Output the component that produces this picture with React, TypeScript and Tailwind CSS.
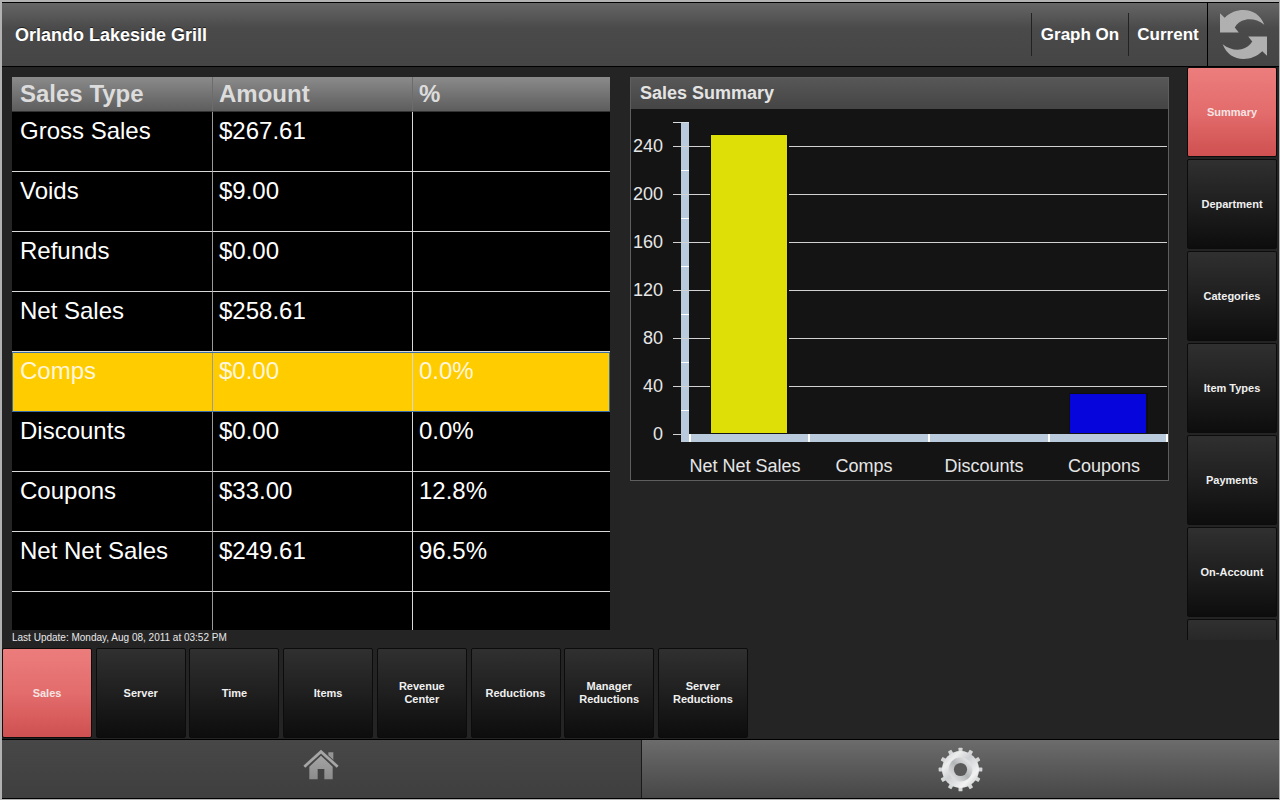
import { useState } from 'react';
import clsx from 'clsx';

type SalesRow = { type: string; amount: string; percent: string };

const salesRows: SalesRow[] = [
  { type: 'Gross Sales', amount: '$267.61', percent: '' },
  { type: 'Voids', amount: '$9.00', percent: '' },
  { type: 'Refunds', amount: '$0.00', percent: '' },
  { type: 'Net Sales', amount: '$258.61', percent: '' },
  { type: 'Comps', amount: '$0.00', percent: '0.0%' },
  { type: 'Discounts', amount: '$0.00', percent: '0.0%' },
  { type: 'Coupons', amount: '$33.00', percent: '12.8%' },
  { type: 'Net Net Sales', amount: '$249.61', percent: '96.5%' },
];

const chartData = [
  { label: 'Net Net Sales', value: 249, color: '#dfdf08' },
  { label: 'Comps', value: 0, color: '#00c000' },
  { label: 'Discounts', value: 0, color: '#c00000' },
  { label: 'Coupons', value: 33, color: '#0606dc' },
];

const views = ['Summary', 'Department', 'Categories', 'Item Types', 'Payments', 'On-Account', ''];

const reports = [
  'Sales',
  'Server',
  'Time',
  'Items',
  'Revenue Center',
  'Reductions',
  'Manager Reductions',
  'Server Reductions',
];

function TileButton({
  label,
  active,
  onClick,
}: {
  label: string;
  active: boolean;
  onClick: () => void;
}) {
  return (
    <button
      onClick={onClick}
      aria-pressed={active}
      aria-label={label || 'More'}
      className={clsx(
        'flex size-[90px] shrink-0 items-center justify-center rounded-xs border border-[#0c0c0c] px-2 text-center text-[11px] leading-[13px] font-bold bg-linear-to-b',
        active
          ? 'from-[#ec7d7d] via-[#e36c6c] to-[#cf5050] text-[#f6e4e4]'
          : 'from-[#303030] via-[#1f1f1f] to-[#0d0d0d] text-[#f0f0f0]'
      )}
    >
      {label}
    </button>
  );
}

function RefreshIcon() {
  const arrow =
    'M6 16 L20 29 C36 13 56 6 76 6 C104 6 128 22 138 50 C120 36 100 31 82 35 C67 38 56 47 50 58 L62 73 L6 73 Z';
  return (
    <svg viewBox="0 0 152 158" className="h-[53px] w-[51px]" fill="#b0b0b0" aria-hidden="true">
      <path d={arrow} />
      <path d={arrow} transform="rotate(180 76 79)" />
    </svg>
  );
}

function HomeIcon() {
  return (
    <svg viewBox="0 0 108 96" className="h-8 w-9" aria-hidden="true">
      <defs>
        <linearGradient id="house" x1="0" y1="0" x2="0" y2="1">
          <stop offset="0" stopColor="#a4a4a4" />
          <stop offset="1" stopColor="#8c8c8c" />
        </linearGradient>
      </defs>
      <path d="M76 10 H91 V34 L76 20 Z" fill="#949494" />
      <path d="M19 53 L54 20 L89 53 V91 H64 V60 H44 V91 H19 Z" fill="url(#house)" />
      <path d="M4 53 L54 8 L104 53" fill="none" stroke="#4a4a4a" strokeWidth="13" />
      <path d="M4 53 L54 8 L104 53" fill="none" stroke="#a6a6a6" strokeWidth="8" />
    </svg>
  );
}

function GearIcon() {
  const teeth = Array.from({ length: 12 }, (_, i) => i * 30);
  return (
    <svg viewBox="0 0 136 136" className="size-[45px]" aria-hidden="true">
      <defs>
        <linearGradient id="steel" x1="0" y1="0" x2="1" y2="1">
          <stop offset="0" stopColor="#c4c7c9" />
          <stop offset="0.25" stopColor="#eceded" />
          <stop offset="0.45" stopColor="#cdd0d2" />
          <stop offset="0.75" stopColor="#f2f2f2" />
          <stop offset="1" stopColor="#b4b7b9" />
        </linearGradient>
        <linearGradient id="steelInner" x1="1" y1="0" x2="0" y2="1">
          <stop offset="0" stopColor="#e8e8e8" />
          <stop offset="0.5" stopColor="#b2b5b7" />
          <stop offset="1" stopColor="#e2e3e4" />
        </linearGradient>
      </defs>
      {teeth.map(angle => (
        <rect
          key={angle}
          x="62"
          y="2"
          width="12"
          height="18"
          rx="2"
          fill="#d4d6d7"
          transform={`rotate(${angle} 68 68)`}
        />
      ))}
      <circle cx="68" cy="68" r="56" fill="url(#steel)" />
      <circle cx="68" cy="68" r="28" fill="none" stroke="url(#steelInner)" strokeWidth="16" />
      <circle cx="68" cy="68" r="20" fill="#5a5a5a" />
    </svg>
  );
}

function SalesTable() {
  const [selected, setSelected] = useState('Comps');

  return (
    <table className="w-full table-fixed border-separate border-spacing-0 bg-black text-left text-2xl text-white">
      <colgroup>
        <col className="w-[201px]" />
        <col className="w-[200px]" />
        <col />
      </colgroup>
      <thead>
        <tr className="h-[35px] bg-linear-to-b from-[#8b8b8b] to-[#5c5c5c] text-[#dcdcdc]">
          <th className="border-r border-b border-r-[#6c6c6c] border-b-[#333333] pl-2 leading-8">Sales Type</th>
          <th className="border-r border-b border-r-[#6c6c6c] border-b-[#333333] pl-[6px] leading-8">Amount</th>
          <th className="border-b border-b-[#333333] pl-[6px] leading-8">%</th>
        </tr>
      </thead>
      <tbody>
        {salesRows.map(row => {
          const active = row.type === selected;
          const cell = clsx(
            'border-b py-[3px] align-top leading-8',
            active ? 'border-b-[#3b6ea5]' : 'border-b-[#d8d8d8]'
          );
          return (
            <tr
              key={row.type}
              onClick={() => setSelected(row.type)}
              className={clsx(
                'h-[60px]',
                active && 'bg-[#ffcc00] text-[#fff6dc] outline-1 -outline-offset-1 outline-[#3b6ea5]'
              )}
            >
              <td className={clsx(cell, 'border-r border-r-[#9a9a9a] pl-2')}>{row.type}</td>
              <td className={clsx(cell, 'border-r border-r-[#d8d8d8] pl-[6px]')}>{row.amount}</td>
              <td className={clsx(cell, 'pl-[6px]')}>{row.percent}</td>
            </tr>
          );
        })}
        {/* Spare row at the end of the grid */}
        <tr className="h-[38px]">
          <td className="border-r border-r-[#9a9a9a]" />
          <td className="border-r border-r-[#d8d8d8]" />
          <td />
        </tr>
      </tbody>
    </table>
  );
}

const PLOT_LEFT = 58;
const PLOT_RIGHT = 537;
const PLOT_TOP = 13;
const BASELINE = 325;
const AXIS_MAX = 260;

function SalesChart() {
  const y = (value: number) => Math.round(BASELINE - (value / AXIS_MAX) * (BASELINE - PLOT_TOP));
  const step = (PLOT_RIGHT - PLOT_LEFT) / chartData.length;

  return (
    <svg viewBox="0 0 537 371" className="w-full" fontSize="18" fill="#e6e6e6">
      {/* Value axis */}
      <rect x="50" y={PLOT_TOP} width="8" height={BASELINE - PLOT_TOP + 8} fill="#b9cadc" />
      <rect x="42" y={PLOT_TOP} width="16" height="1" fill="#d8dde2" />
      {[20, 60, 100, 140, 180, 220].map(v => (
        <rect key={v} x="50" y={y(v)} width="8" height="1" fill="#ffffff" />
      ))}
      {[0, 40, 80, 120, 160, 200, 240].map(v => (
        <g key={v}>
          <rect x="42" y={y(v)} width={(v === 0 ? PLOT_LEFT : PLOT_RIGHT - 1) - 42} height="1" fill="#d2d2d2" />
          <text x="32" y={y(v) + 6} textAnchor="end">
            {v}
          </text>
        </g>
      ))}

      {/* Category axis */}
      <rect x="50" y={BASELINE} width={PLOT_RIGHT - 50} height="8" fill="#b9cadc" />
      {chartData.map((item, i) => {
        const left = Math.floor(PLOT_LEFT + step * i);
        return (
          <g key={item.label}>
            <rect x={left} y={BASELINE} width="2" height="8" fill="#ffffff" />
            {item.value > 0 && (
              <>
                <rect x={left + 21} y={y(item.value) - 1} width="79" height={BASELINE - y(item.value)} fill="#0e0e0e" />
                <rect x={left + 22} y={y(item.value)} width="76" height={BASELINE - y(item.value) - 1} fill={item.color} />
              </>
            )}
            <text x={left + 56} y="363" textAnchor="middle">
              {item.label}
            </text>
          </g>
        );
      })}
      <rect x={PLOT_RIGHT - 2} y={BASELINE} width="2" height="8" fill="#ffffff" />
    </svg>
  );
}

export default function App() {
  const [view, setView] = useState('Summary');
  const [report, setReport] = useState('Sales');
  const [showGraph, setShowGraph] = useState(true);

  return (
    <div className="flex min-h-screen flex-col border-t-2 border-r border-b border-l-2 border-[#b2b2b2] bg-[#242424] font-['Liberation_Sans',Arial,sans-serif] text-white">
      <header className="flex h-[65px] items-center border-y border-black bg-linear-to-b from-[#666666] via-[#4a4a4a] via-40% to-[#454545] font-bold text-shadow-[0_-1px_0_#222222]">
        <h1 className="flex-1 pl-[13px] text-lg">Orlando Lakeside Grill</h1>
        <button
          onClick={() => setShowGraph(!showGraph)}
          className="h-[43px] w-[97px] border-l border-[#222222] text-[17px]"
        >
          Graph {showGraph ? 'On' : 'Off'}
        </button>
        <button className="h-[43px] w-[79px] border-l border-[#222222] text-[17px]">Current</button>
        <button
          aria-label="Refresh"
          className="flex w-[72px] items-center justify-center self-stretch border-l border-black"
        >
          <RefreshIcon />
        </button>
      </header>

      <main className="flex flex-1">
        <div className="flex flex-1 flex-col pt-[10px] pr-[18px] pl-[10px]">
          <div className="flex items-start gap-5">
            <div className="min-w-0 flex-[598]">
              <SalesTable />
              <p className="text-[10px] leading-4 text-[#e8e8e8]">
                Last Update: Monday, Aug 08, 2011 at 03:52 PM
              </p>
            </div>
            <section className="min-w-0 flex-[539]">
              {showGraph && (
                <div className="border border-[#5e5e5e] bg-[#141414]">
                  <h2 className="bg-linear-to-b from-[#575757] to-[#454545] pl-[9px] text-lg leading-[31px] font-bold text-[#e4e4e4]">
                    Sales Summary
                  </h2>
                  <SalesChart />
                </div>
              )}
            </section>
          </div>
        </div>

        <nav className="mr-[2px] flex max-h-[573px] flex-col gap-[2px] overflow-hidden">
          {views.map(label => (
            <TileButton key={label} label={label} active={label === view} onClick={() => setView(label)} />
          ))}
        </nav>
      </main>

      <nav className="flex h-[92px] max-w-[746px] items-center justify-between">
        {reports.map(label => (
          <TileButton key={label} label={label} active={label === report} onClick={() => setReport(label)} />
        ))}
      </nav>

      <footer className="grid h-[60px] grid-cols-2 border-y border-black">
        <button
          aria-label="Home"
          className="flex items-center justify-center bg-linear-to-b from-[#474747] to-[#3f3f3f] pb-2"
        >
          <HomeIcon />
        </button>
        <button
          aria-label="Settings"
          className="flex items-center justify-center border-l border-[#1a1a1a] bg-linear-to-b from-[#6c6c6c] to-[#474747]"
        >
          <GearIcon />
        </button>
      </footer>
    </div>
  );
}
